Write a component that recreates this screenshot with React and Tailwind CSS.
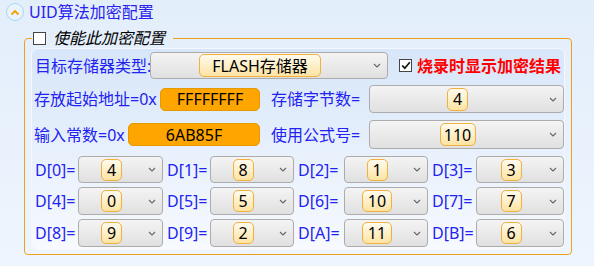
import React from "react";

const font = { fontFamily: '"Noto Sans", "Noto Sans CJK SC", sans-serif' };

const Chevron = () => (
  <svg width="8" height="5" viewBox="0 0 8 5" className="ml-[4px] mr-[6px] shrink-0">
    <path d="M1 1 L4 4 L7 1" fill="none" stroke="#666" strokeWidth="1.1" />
  </svg>
);

const Select = ({ className, value, chip }) => (
  <div
    className={
      "flex items-center rounded-[4px] border border-[#acacac] bg-gradient-to-b from-[#f4f4f4] to-[#e0e0e0] " +
      className
    }
  >
    <div className="flex flex-1 justify-center">
      <span
        className={
          "flex h-[22px] items-center justify-center whitespace-nowrap rounded-[5px] border border-[#f1b040] bg-gradient-to-b from-[#fffbee] to-[#fde3a2] text-[16px] leading-none text-black " +
          chip
        }
      >
        {value}
      </span>
    </div>
    <Chevron />
  </div>
);

const Orange = ({ className, value }) => (
  <div
    className={
      "flex h-[23px] items-center justify-center rounded-[5px] border border-[#e49a00] bg-[#ffa500] text-[16px] leading-none text-black " +
      className
    }
  >
    {value}
  </div>
);

const dRows = [
  [["D[0]=", "4"], ["D[1]=", "8"], ["D[2]=", "1"], ["D[3]=", "3"]],
  [["D[4]=", "0"], ["D[5]=", "5"], ["D[6]=", "10"], ["D[7]=", "7"]],
  [["D[8]=", "9"], ["D[9]=", "2"], ["D[A]=", "11"], ["D[B]=", "6"]],
];

const labelW = ["w-[43px]", "w-[43px]", "w-[46px]", "w-[44px]"];
const selW = ["w-[85px]", "w-[84px]", "w-[84px]", "w-[88px]"];
const rowStyle = ["mt-[7px] h-[27px]", "mt-[4px] h-[28px]", "mt-[4px] h-[28px]"];

const App = () => {
  return (
    <div
      className="h-[266px] w-[594px] overflow-hidden bg-gradient-to-b from-[#e3eefb] to-[#eef5fd]"
      style={font}
    >
      <div className="flex h-[28px] items-start pl-[6px] pt-[3px]">
        <div className="flex h-[18px] w-[18px] items-center justify-center rounded-full border-[1.5px] border-[#a9d6f2] bg-[#eaf3fc]">
          <svg width="10" height="7" viewBox="0 0 10 7">
            <path d="M1.5 5.5 L5 2 L8.5 5.5" fill="none" stroke="#f5a000" strokeWidth="1.8" />
          </svg>
        </div>
        <span className="ml-[5px] whitespace-nowrap text-[16px] leading-[18px] text-[#2a22ee]">UID算法加密配置</span>
      </div>

      <fieldset className="ml-[24px] w-[547px] rounded-[4px] border border-[#f0a11c] px-[6px] pb-[4px]">
        <legend className="ml-[1px] flex h-[20px] items-center pl-[1px] pr-[8px]">
          <span className="inline-block h-[13px] w-[13px] border border-[#444] bg-white" />
          <span className="ml-[7px] whitespace-nowrap text-[16px] italic leading-none text-black">使能此加密配置</span>
        </legend>

        <div className="h-[202px] rounded-[7px] border border-[#f4f8fe] bg-gradient-to-b from-[#d7e6f9] to-[#f7fafe] pl-[2px]">
          <div className="mt-[3px] flex h-[27px] items-center">
            <span className="w-[116px] whitespace-nowrap pl-[1px] text-[16px] text-[#2222f2]">目标存储器类型:</span>
            <Select className="h-[27px] w-[238px]" value="FLASH存储器" chip="px-[12px] h-[23px]" />
            <span className="ml-[11px] flex h-[13px] w-[13px] items-center justify-center border border-[#444] bg-white">
              <svg width="10" height="9" viewBox="0 0 10 9">
                <path d="M1.2 4.5 L3.8 7.2 L8.8 1.2" fill="none" stroke="#111" strokeWidth="1.7" />
              </svg>
            </span>
            <span className="ml-[5px] whitespace-nowrap text-[16px] font-bold text-[#ff0000]">烧录时显示加密结果</span>
          </div>

          <div className="mt-[6px] flex h-[28px] items-center">
            <span className="w-[126px] whitespace-nowrap text-[16px] text-[#2222f2]">存放起始地址=0x</span>
            <Orange className="w-[100px]" value="FFFFFFFF" />
            <span className="ml-[11px] w-[98px] whitespace-nowrap text-[16px] text-[#2222f2]">存储字节数=</span>
            <Select className="h-[28px] w-[195px]" value="4" chip="w-[21px] h-[23px]" />
          </div>

          <div className="mt-[7px] flex h-[29px] items-center">
            <span className="w-[94px] whitespace-nowrap text-[16px] text-[#2222f2]">输入常数=0x</span>
            <Orange className="w-[132px]" value="6AB85F" />
            <span className="ml-[11px] w-[98px] whitespace-nowrap text-[16px] text-[#2222f2]">使用公式号=</span>
            <Select className="h-[29px] w-[195px]" value="110" chip="w-[36px] h-[23px]" />
          </div>

          {dRows.map((row, ri) => (
            <div key={ri} className={"flex items-center pl-[1px] " + rowStyle[ri]}>
              {row.map(([label, value], ci) => (
                <div key={ci} className={"flex h-full items-center " + (ci > 0 ? "ml-[4px]" : "")}>
                  <span className={"whitespace-nowrap text-[16px] text-[#2222f2] " + labelW[ci]}>{label}</span>
                  <Select
                    className={"h-full " + selW[ci]}
                    value={value}
                    chip={value.length > 1 ? "w-[30px]" : "w-[21px]"}
                  />
                </div>
              ))}
            </div>
          ))}
        </div>
      </fieldset>
    </div>
  );
};

export default App;
